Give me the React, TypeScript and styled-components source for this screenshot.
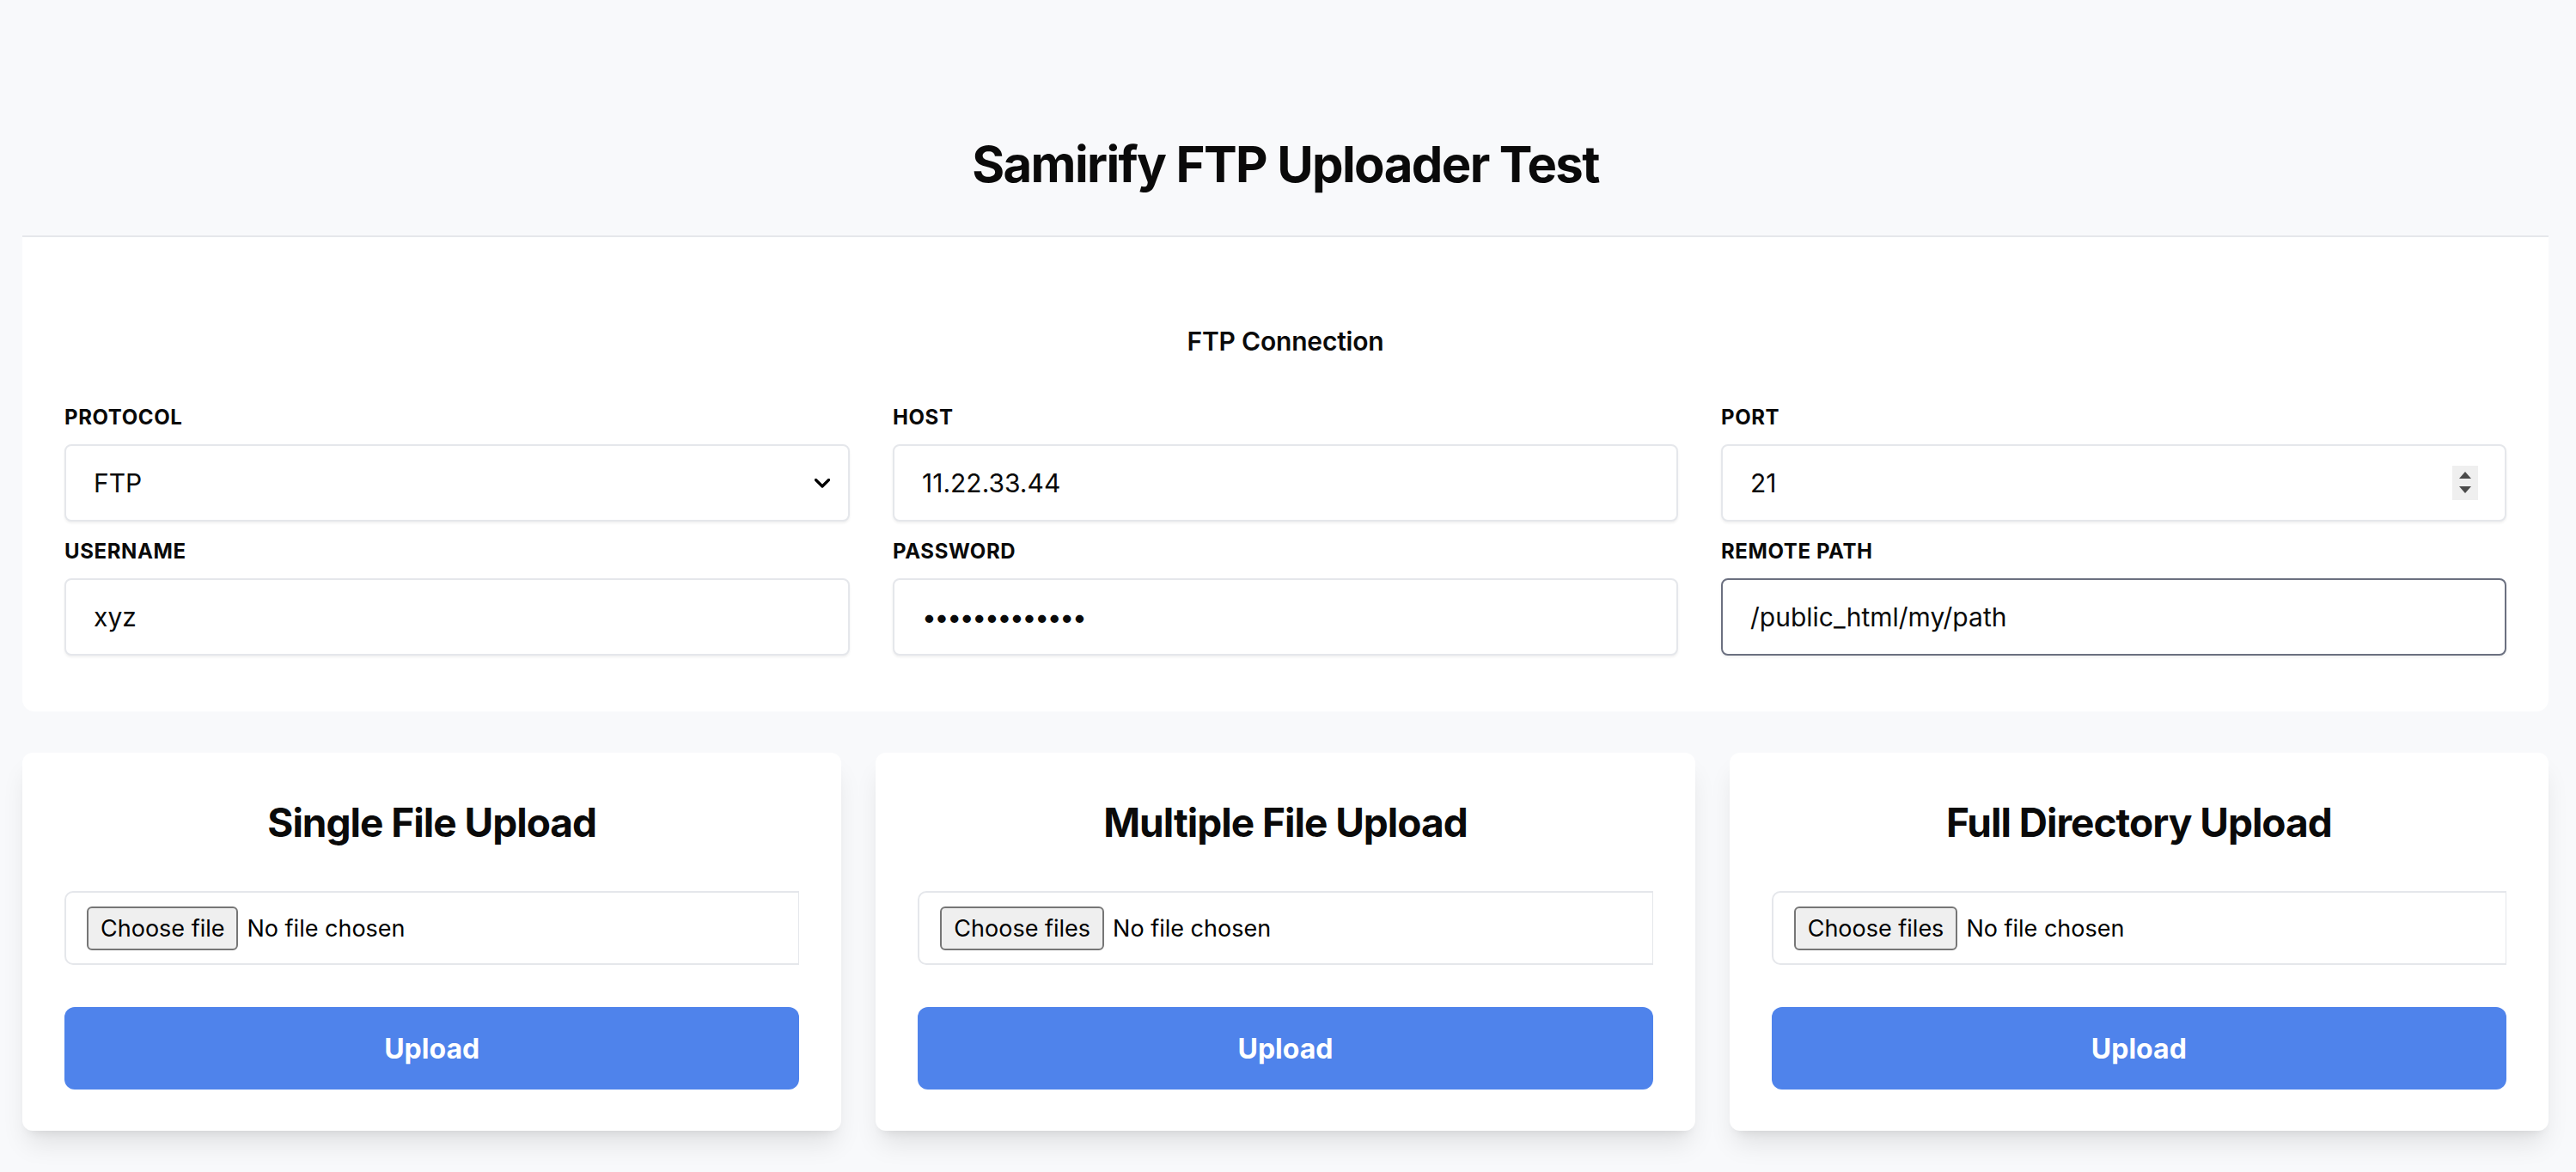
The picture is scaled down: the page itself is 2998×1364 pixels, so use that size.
import React, { useEffect, useRef } from "react";
import styled, { createGlobalStyle } from "styled-components";

const GlobalStyle = createGlobalStyle`
  * { box-sizing: border-box; }
  html, body { margin: 0; padding: 0; background: #f8f9fb; }
  body {
    font-family: Inter, "Noto Sans", "Liberation Sans", sans-serif;
    color: #0a0a0a;
  }
`;

const Page = styled.div`
  padding: 0 32px 48px 26px;
  min-height: 1364px;
`;

const Header = styled.header`
  padding: 155px 0 47px;
  border-bottom: 2px solid #e5e7eb;
  text-align: center;
`;

const Title = styled.h1`
  margin: 0;
  font-size: 58px;
  line-height: 72px;
  font-weight: 700;
  letter-spacing: -1.6px;
  color: #0a0a0a;
`;

const ConnectionCard = styled.section`
  background: #ffffff;
  border-radius: 0 0 14px 14px;
  padding: 103px 49px 65px;
`;

const SectionTitle = styled.h2`
  margin: 0 0 56px;
  text-align: center;
  font-size: 30px;
  line-height: 36px;
  font-weight: 600;
  letter-spacing: -0.2px;
  color: #0a0a0a;
`;

const FieldGrid = styled.div`
  display: grid;
  grid-template-columns: repeat(3, 1fr);
  column-gap: 50px;
  row-gap: 20px;
`;

const Field = styled.label`
  display: flex;
  flex-direction: column;
  gap: 16px;
`;

const FieldLabel = styled.span`
  font-size: 24px;
  line-height: 30px;
  font-weight: 700;
  letter-spacing: 0.6px;
  text-transform: uppercase;
  color: #0a0a0a;
`;

const boxBase = `
  height: 90px;
  width: 100%;
  background: #ffffff;
  border-radius: 8px;
  box-shadow: 0 2px 3px rgba(0, 0, 0, 0.06);
  font-family: Inter, "Noto Sans", "Liberation Sans", sans-serif;
  font-size: 30px;
  color: #0a0a0a;
`;

const TextInput = styled.input<{ $focused?: boolean }>`
  ${boxBase}
  border: 2px solid ${(p) => (p.$focused ? "#6b7080" : "#e5e7eb")};
  padding: 0 32px;
  outline: none;
  caret-color: #000;
  letter-spacing: ${(p) => (p.type === "password" ? "-2.3px" : "0")};
`;

const Shell = styled.div`
  ${boxBase}
  border: 2px solid #e5e7eb;
  display: flex;
  align-items: center;
  padding: 0 21px 0 32px;
  gap: 12px;
`;

const BareSelect = styled.select`
  flex: 1;
  appearance: none;
  -webkit-appearance: none;
  border: none;
  outline: none;
  background: transparent;
  padding: 0;
  font: inherit;
  color: inherit;
`;

const BareInput = styled.input`
  flex: 1;
  min-width: 0;
  border: none;
  outline: none;
  background: transparent;
  padding: 0;
  font: inherit;
  color: inherit;
`;

const Spinner = styled.div`
  width: 30px;
  height: 40px;
  margin-right: 10px;
  background: #efefef;
  display: flex;
  align-items: center;
  justify-content: center;
`;

const UploadGrid = styled.div`
  display: grid;
  grid-template-columns: repeat(3, 1fr);
  gap: 40px;
  margin-top: 48px;
`;

const UploadCard = styled.section`
  background: #ffffff;
  border-radius: 12px;
  padding: 53px 49px 48px;
  box-shadow: 0 20px 30px -6px rgba(0, 0, 0, 0.1), 0 8px 12px -8px rgba(0, 0, 0, 0.1);
  display: flex;
  flex-direction: column;
`;

const CardTitle = styled.h3`
  margin: 0 0 52px;
  text-align: center;
  font-size: 46px;
  line-height: 56px;
  font-weight: 700;
  letter-spacing: -1px;
  color: #0a0a0a;
`;

const FileBox = styled.div`
  height: 86px;
  border: 2px solid #e5e7eb;
  border-right-width: 1px;
  border-radius: 10px 0 0 10px;
  display: flex;
  align-items: center;
  padding: 0 24px;
  gap: 10px;
  font-size: 27px;
`;

const ChooseButton = styled.button`
  height: 51px;
  padding: 0 14px;
  background: #efefef;
  border: 2px solid #767676;
  border-radius: 6px;
  font-family: Inter, "Noto Sans", "Liberation Sans", sans-serif;
  font-size: 27px;
  color: #000;
  cursor: pointer;
`;

const FileStatus = styled.span`
  color: #000;
`;

const UploadButton = styled.button`
  margin-top: 49px;
  height: 96px;
  border: none;
  border-radius: 12px;
  background: #4f83eb;
  color: #ffffff;
  font-family: Inter, "Noto Sans", "Liberation Sans", sans-serif;
  font-size: 32px;
  font-weight: 700;
  cursor: pointer;
`;

function Chevron() {
  return (
    <svg width="18" height="11" viewBox="0 0 18 11" fill="none">
      <path d="M1.5 1.5 L9 9 L16.5 1.5" stroke="#000" strokeWidth="3.2" strokeLinecap="round" strokeLinejoin="round" />
    </svg>
  );
}

function SpinArrows() {
  return (
    <svg width="16" height="28" viewBox="0 0 16 28">
      <polygon points="8,1 15,9 1,9" fill="#4a4a4a" />
      <polygon points="1,18 15,18 8,26" fill="#4a4a4a" />
    </svg>
  );
}

function UploadPanel({ title, multiple }: { title: string; multiple?: boolean }) {
  return (
    <UploadCard>
      <CardTitle>{title}</CardTitle>
      <FileBox>
        <ChooseButton type="button">{multiple ? "Choose files" : "Choose file"}</ChooseButton>
        <FileStatus>No file chosen</FileStatus>
      </FileBox>
      <UploadButton type="button">Upload</UploadButton>
    </UploadCard>
  );
}

export default function App() {
  const pathRef = useRef<HTMLInputElement>(null);
  useEffect(() => {
    const el = pathRef.current;
    if (el) {
      el.focus();
      const n = el.value.length;
      el.setSelectionRange(n, n);
    }
  }, []);

  return (
    <>
      <GlobalStyle />
      <Page>
        <Header>
          <Title>Samirify FTP Uploader Test</Title>
        </Header>
        <ConnectionCard>
          <SectionTitle>FTP Connection</SectionTitle>
          <FieldGrid>
            <Field>
              <FieldLabel>Protocol</FieldLabel>
              <Shell>
                <BareSelect defaultValue="ftp">
                  <option value="ftp">FTP</option>
                  <option value="sftp">SFTP</option>
                </BareSelect>
                <Chevron />
              </Shell>
            </Field>
            <Field>
              <FieldLabel>Host</FieldLabel>
              <TextInput type="text" defaultValue="11.22.33.44" />
            </Field>
            <Field>
              <FieldLabel>Port</FieldLabel>
              <Shell>
                <BareInput type="text" defaultValue="21" />
                <Spinner>
                  <SpinArrows />
                </Spinner>
              </Shell>
            </Field>
            <Field>
              <FieldLabel>Username</FieldLabel>
              <TextInput type="text" defaultValue="xyz" />
            </Field>
            <Field>
              <FieldLabel>Password</FieldLabel>
              <TextInput type="password" defaultValue="abcdefghijklm" />
            </Field>
            <Field>
              <FieldLabel>Remote Path</FieldLabel>
              <TextInput ref={pathRef} type="text" $focused defaultValue="/public_html/my/path" />
            </Field>
          </FieldGrid>
        </ConnectionCard>
        <UploadGrid>
          <UploadPanel title="Single File Upload" />
          <UploadPanel title="Multiple File Upload" multiple />
          <UploadPanel title="Full Directory Upload" multiple />
        </UploadGrid>
      </Page>
    </>
  );
}
